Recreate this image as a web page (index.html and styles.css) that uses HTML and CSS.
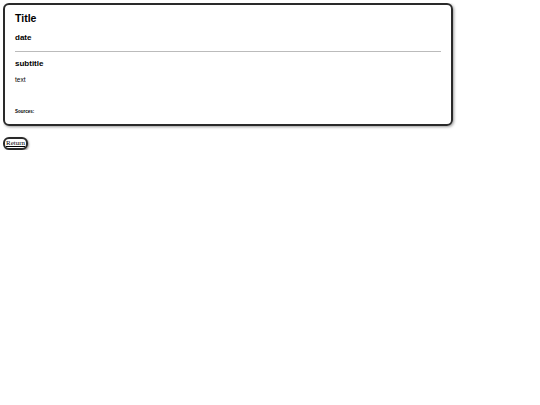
FILE: index.html
```html
<!DOCTYPE html>
<html lang="en">
<head>
    <meta charset="UTF-8">
    <title>Article</title>
    <link rel="stylesheet" href="styles.css">
</head>
<body>
    <div class="article">
        <h1 class="title">Title</h1>
        <h3 class="date">date</h3>
        <hr>
        <h3 class="subtitle">subtitle</h3>
        <p class="text">text</p>
        <p class="sources">Sources:</p>
    </div>
    <button class="return" type="button"><u>Return</u></button>
</body>
</html>
```
FILE: styles.css
```css
body {
    margin: 3px;
    font-family: "Liberation Sans", Arial, sans-serif;
    color: #000;
    background: #fff;
}

/* Article card */
.article {
    box-sizing: border-box;
    width: 450px;
    padding: 7px 10px 9px 10px;
    border: 2px solid #2a2a2a;
    border-radius: 6px;
    box-shadow: 1px 1px 3px rgba(0, 0, 0, 0.4);
}

.title {
    font-size: 10.5px;
    line-height: 12px;
    margin: 0;
}

.date {
    font-size: 8px;
    line-height: 10px;
    margin: 9px 0 0 0;
}

hr {
    border: none;
    border-top: 1px solid #bbb;
    margin: 8px 0 0 0;
}

.subtitle {
    font-size: 8px;
    line-height: 10px;
    margin: 7px 0 0 0;
}

.text {
    font-size: 6.5px;
    line-height: 8px;
    margin: 7px 0 0 0;
}

.sources {
    font-size: 4.5px;
    line-height: 6px;
    font-weight: bold;
    margin: 25px 0 0 0;
}

/* Return button */
.return {
    margin-top: 11px;
    font-family: "Liberation Serif", "Times New Roman", serif;
    font-size: 7px;
    line-height: 9px;
    padding: 0 1px;
    color: #000;
    background: #fff;
    border: 2px solid #2a2a2a;
    border-radius: 6px;
    box-shadow: 1px 1px 2px rgba(0, 0, 0, 0.4);
}
```
